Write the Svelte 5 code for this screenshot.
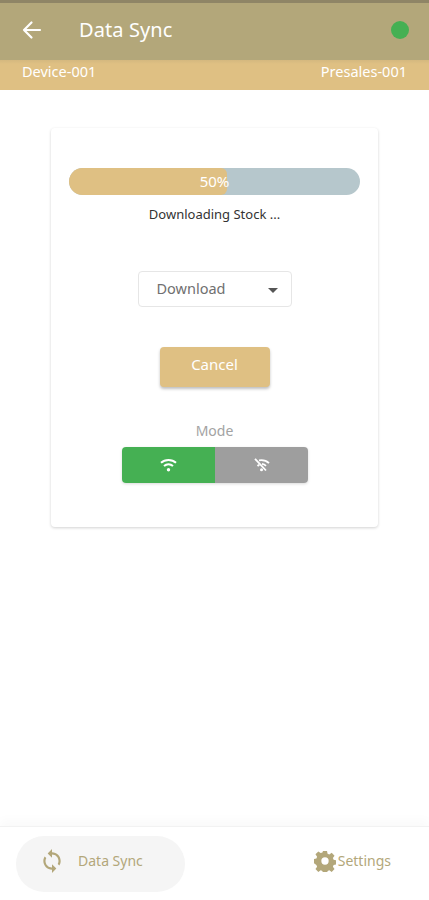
<script lang="ts">
	let progress = $state(50);
	let mode = $state("online");
</script>

<div class="page">
	<div class="status"></div>
	<header class="topbar">
		<svg class="back" width="20" height="20" viewBox="0 0 20 20" fill="none" stroke="#fff" stroke-width="2.2" stroke-linecap="round" stroke-linejoin="round">
			<path d="M2 10h16M9.500 2.500 2 10l7.500 7.500" />
		</svg>
		<h1>Data Sync</h1>
		<span class="dot"></span>
	</header>
	<div class="subbar">
		<span>Device-001</span>
		<span>Presales-001</span>
	</div>

	<main>
		<section class="card">
			<div class="bar">
				<div class="fill" style="width: calc({progress}% + 12px)"></div>
				<span>{progress}%</span>
			</div>
			<p class="state">Downloading Stock ...</p>

			<div class="select">
				<span>Download</span>
				<i class="caret"></i>
			</div>

			<button class="cancel" type="button">Cancel</button>

			<p class="mode-label">Mode</p>
			<div class="toggle">
				<button type="button" class:on={mode === "online"} onclick={() => (mode = "online")} aria-label="Online">
					<svg width="17" height="14" viewBox="0 0 17 14" fill="none" stroke="#fff" stroke-width="2" stroke-linecap="butt">
						<path d="M1 4.800C5 1 12 1 16 4.800" />
						<path d="M4 8c2.600-2.200 6.400-2.200 9 0" />
						<circle cx="8.500" cy="11.800" r="1.700" fill="#fff" stroke="none" />
					</svg>
				</button>
				<button type="button" class:on={mode === "offline"} onclick={() => (mode = "offline")} aria-label="Offline">
					<svg width="17" height="14" viewBox="0 0 17 14" fill="none" stroke="#fff" stroke-width="1.800" stroke-linecap="butt">
						<path d="M6 2.300c3.600-.6 7.500.4 10 2.800" />
						<path d="M9 5.800c1.500.2 2.900.9 4 2" />
						<path d="M4.500 8c.6-.5 1.200-.8 1.900-1.100" />
						<path d="M2 .8 13 12.500" />
						<circle cx="8.500" cy="11.800" r="1.500" fill="#fff" stroke="none" />
					</svg>
				</button>
			</div>
		</section>
	</main>

	<nav class="tabs">
		<div class="tab active">
			<svg width="26" height="26" viewBox="0 0 24 24" fill="#b3a77a">
				<path d="M12 4V1L8 5l4 4V6c3.310 0 6 2.690 6 6 0 1.010-.25 1.970-.7 2.800l1.460 1.460C19.540 15.030 20 13.570 20 12c0-4.420-3.580-8-8-8zm0 14c-3.310 0-6-2.690-6-6 0-1.010.25-1.970.7-2.800L5.240 7.740C4.460 8.970 4 10.430 4 12c0 4.420 3.580 8 8 8v3l4-4-4-4v3z" />
			</svg>
			<span>Data Sync</span>
		</div>
		<div class="tab plain">
			<svg width="22" height="22" viewBox="0 0 24 24" fill="#b3a77a">
				<path fill-rule="evenodd" d="M9.800 1h4.400l.6 3.100 1.900.8 2.600-1.800 3.100 3.100-1.800 2.600.8 1.900 3.100.6v4.400l-3.100.6-.8 1.900 1.800 2.600-3.100 3.100-2.600-1.800-1.900.8-.6 3.100H9.800l-.6-3.100-1.900-.8-2.600 1.800-3.100-3.100 1.800-2.600-.8-1.900L-.5 14.200V9.800l3.100-.6.8-1.900-1.800-2.600 3.100-3.100 2.600 1.800 1.900-.8zM12 8a4 4 0 1 0 0 8 4 4 0 0 0 0-8z" />
			</svg>
			<span>Settings</span>
		</div>
	</nav>
</div>

<style>
	:global(body) {
		margin: 0;
		background: #fff;
	}

	.page {
		display: flex;
		flex-direction: column;
		height: 900px;
		overflow: hidden;
		font-family: "Noto Sans", "Open Sans", sans-serif;
		background: #fff;
	}

	.status {
		height: 3px;
		background: #8f8566;
	}

	.topbar {
		display: flex;
		align-items: center;
		height: 57px;
		padding: 0 20px 3px 22px;
		box-sizing: border-box;
		background: #b3a77a;
		color: #fff;
	}

	.back {
		flex: none;
	}

	h1 {
		margin: 0 0 2px 37px;
		font-size: 20px;
		font-weight: 400;
		letter-spacing: 0.1px;
	}

	.dot {
		width: 18px;
		height: 18px;
		margin-left: auto;
		border-radius: 50%;
		background: #45b053;
	}

	.subbar {
		display: flex;
		justify-content: space-between;
		align-items: flex-start;
		height: 30px;
		padding: 1px 22px 0 22px;
		box-sizing: border-box;
		background: linear-gradient(#d4b87f, #dfc083 4px);
		color: #fff;
		font-size: 14.500px;
		line-height: 20px;
	}

	main {
		flex: 1;
		padding: 38px 51px 0;
	}

	.card {
		display: flex;
		flex-direction: column;
		align-items: center;
		height: 399px;
		padding-top: 40px;
		box-sizing: border-box;
		background: #fff;
		border-radius: 4px;
		box-shadow: 0 1px 3px rgba(0, 0, 0, 0.18);
	}

	.bar {
		position: relative;
		width: 291px;
		height: 27px;
		border-radius: 14px;
		overflow: hidden;
		background: #b6c7cc;
	}

	.fill {
		height: 100%;
		border-radius: 0 6px 6px 0;
		background: #dfc083;
	}

	.bar span {
		position: absolute;
		inset: 0;
		text-align: center;
		color: #fff;
		font-size: 15px;
		line-height: 26px;
	}

	.state {
		margin: 9px 0 0;
		color: #333;
		font-size: 13px;
		line-height: 20px;
	}

	.select {
		display: flex;
		align-items: center;
		justify-content: space-between;
		width: 154px;
		height: 36px;
		margin-top: 47px;
		padding: 0 13px 3px 18px;
		box-sizing: border-box;
		border: 1px solid #e6e6e6;
		border-radius: 4px;
		color: #707070;
		font-size: 14.500px;
	}

	.caret {
		width: 0;
		height: 0;
		margin-top: 5px;
		border-left: 5px solid transparent;
		border-right: 5px solid transparent;
		border-top: 5px solid #555;
	}

	.cancel {
		width: 110px;
		height: 40px;
		margin-top: 40px;
		padding: 0 0 6px;
		border: 0;
		border-radius: 4px;
		background: #dfc083;
		color: #fff;
		font: inherit;
		font-size: 15px;
		box-shadow: 0 2px 3px rgba(0, 0, 0, 0.25);
	}

	.mode-label {
		margin: 34px 0 0;
		color: #a3a3a3;
		font-size: 14px;
		line-height: 20px;
	}

	.toggle {
		display: flex;
		width: 186px;
		height: 36px;
		margin-top: 6px;
		border-radius: 4px;
		overflow: hidden;
		box-shadow: 0 1px 3px rgba(0, 0, 0, 0.15);
	}

	.toggle button {
		display: flex;
		flex: 1;
		align-items: center;
		justify-content: center;
		padding: 0;
		border: 0;
		background: #9e9e9e;
	}

	.toggle button.on {
		background: #45b053;
	}

	.tabs {
		display: flex;
		align-items: center;
		justify-content: space-between;
		height: 74px;
		padding: 0 38px 0 16px;
		box-sizing: border-box;
		border-top: 1px solid #f2f2f2;
		box-shadow: 0 -6px 10px rgba(0, 0, 0, 0.025);
		color: #b3a77a;
		font-size: 14px;
	}

	.tab {
		display: flex;
		align-items: center;
	}

	.tab.active {
		width: 169px;
		height: 56px;
		padding: 0 0 6px 23px;
		box-sizing: border-box;
		gap: 13px;
		border-radius: 28px;
		background: #f5f5f5;
	}

	.tab.plain {
		gap: 2px;
		padding-bottom: 6px;
		font-size: 14px;
	}
</style>
